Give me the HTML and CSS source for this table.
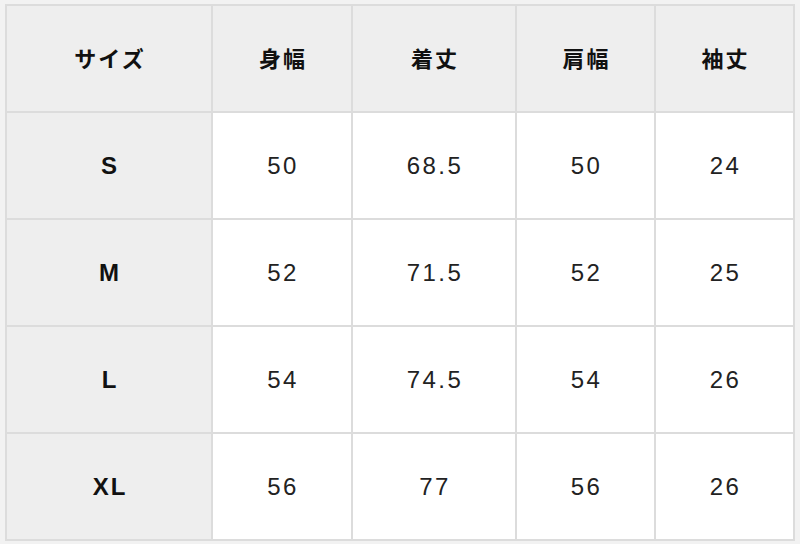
FILE: index.html
```html
<!DOCTYPE html>
<html lang="ja">
<head>
<meta charset="utf-8">
<link rel="stylesheet" href="styles.css">
</head>
<body>
<div class="size-table">
  <div class="cell head">サイズ</div>
  <div class="cell head">身幅</div>
  <div class="cell head">着丈</div>
  <div class="cell head">肩幅</div>
  <div class="cell head">袖丈</div>

  <div class="cell label">S</div>
  <div class="cell num">50</div>
  <div class="cell num">68.5</div>
  <div class="cell num">50</div>
  <div class="cell num">24</div>

  <div class="cell label">M</div>
  <div class="cell num">52</div>
  <div class="cell num">71.5</div>
  <div class="cell num">52</div>
  <div class="cell num">25</div>

  <div class="cell label">L</div>
  <div class="cell num">54</div>
  <div class="cell num">74.5</div>
  <div class="cell num">54</div>
  <div class="cell num">26</div>

  <div class="cell label">XL</div>
  <div class="cell num">56</div>
  <div class="cell num">77</div>
  <div class="cell num">56</div>
  <div class="cell num">26</div>
</div>
</body>
</html>
```

FILE: styles.css
```css
html, body {
  margin: 0;
  padding: 0;
  background: #f2f2f2;
}
body {
  padding: 4px 0 0 5px;
  font-family: "Liberation Sans", "Noto Sans CJK JP", sans-serif;
  color: #1a1a1a;
}
.size-table {
  display: grid;
  grid-template-columns: 204px 138px 162px 137px 137px;
  grid-auto-rows: 105px;
  gap: 2px;
  padding: 2px;
  background: #dcdcdc;
  width: max-content;
}
.cell {
  display: flex;
  align-items: center;
  justify-content: center;
  background: #ffffff;
  padding-left: 2px;
}
.head {
  background: #eeeeee;
  font-family: "Noto Sans CJK JP", "Liberation Sans", sans-serif;
  font-weight: 700;
  font-size: 22px;
  letter-spacing: 2px;
  color: #111;
  padding-bottom: 4px;
}
.label {
  background: #eeeeee;
  font-weight: 700;
  font-size: 24px;
  letter-spacing: 2px;
  color: #111;
}
.num {
  font-size: 24px;
  letter-spacing: 2.5px;
  color: #222;
}
```
